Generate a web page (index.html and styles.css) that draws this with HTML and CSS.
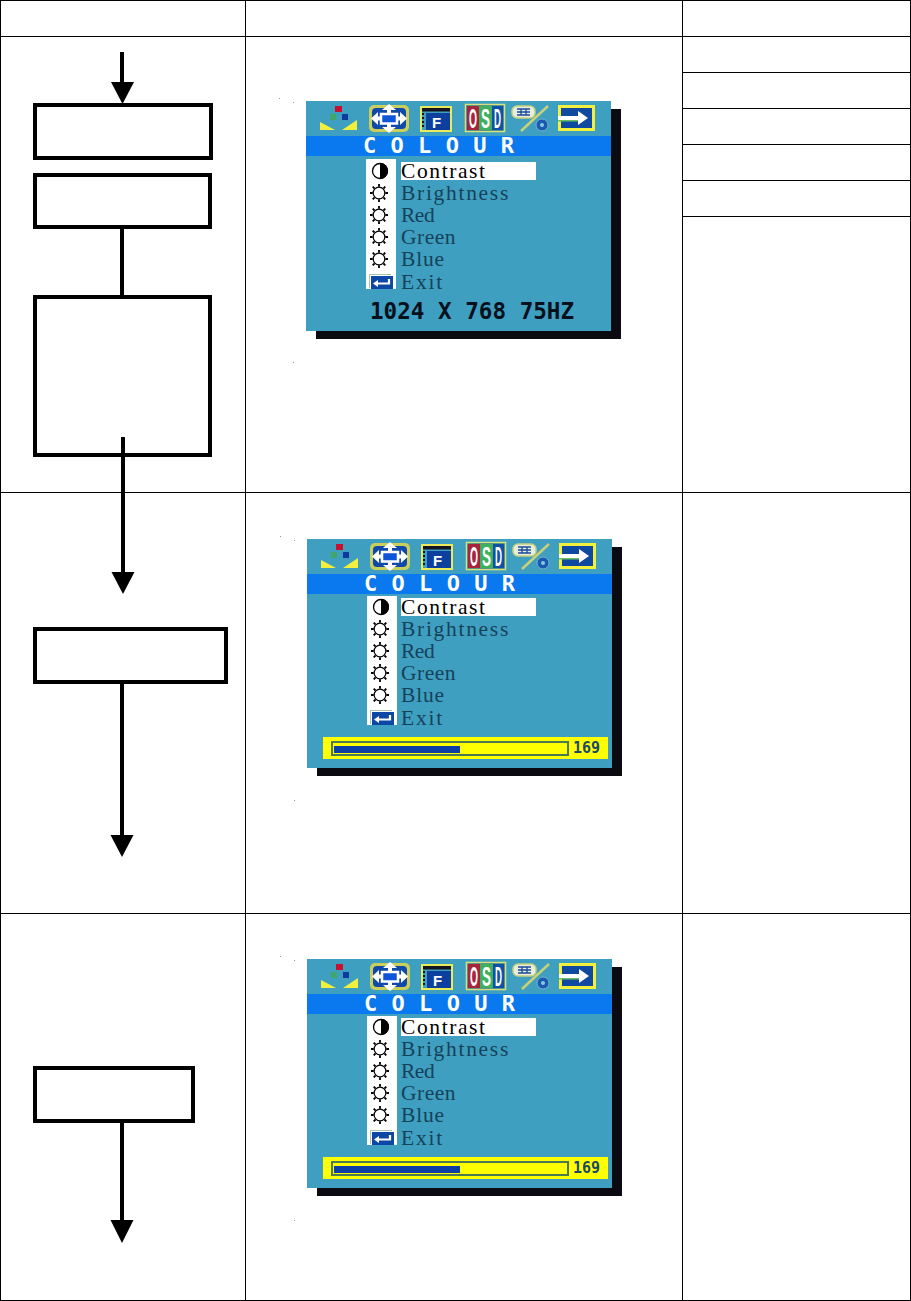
FILE: index.html
```html
<!DOCTYPE html>
<html lang="en">
<head>
<meta charset="utf-8">
<title>OSD colour menu flow</title>
<link rel="stylesheet" href="styles.css">
</head>
<body>
<svg class="defs" width="0" height="0" aria-hidden="true">
  <defs>
    <symbol id="strip" viewBox="0 0 305 35">
      <polygon points="14,29 14,21 29,29" fill="#f2f03c"/>
      <polygon points="36,29 51,19 51,29" fill="#f2f03c"/>
      <rect x="29" y="5" width="7" height="6" fill="#c8102e"/>
      <rect x="24" y="13" width="6" height="6" fill="#3fa568"/>
      <rect x="36" y="13" width="6" height="6" fill="#0d3a9c"/>

      <rect x="63" y="4" width="40" height="27" rx="5" fill="#c9cf5a"/>
      <rect x="66" y="7" width="34" height="21" rx="4" fill="#1149a8"/>
      <polygon points="83,3 90,9 76,9" fill="#fff"/>
      <polygon points="83,32 90,26 76,26" fill="#fff"/>
      <polygon points="65,17.500 72,11 72,24" fill="#fff"/>
      <polygon points="101,17.500 94,11 94,24" fill="#fff"/>
      <path d="M81 8h4v20h-4zM70 15.500h26v4h-26z" fill="#fff"/>
      <rect x="75" y="13" width="16" height="9.500" fill="#0f55d8" stroke="#fff" stroke-width="2.500"/>

      <rect x="114" y="5" width="32" height="26" fill="#eaea5a"/>
      <rect x="116" y="7" width="28" height="22" fill="#3f9fc1"/>
      <rect x="116" y="7" width="28" height="3.500" fill="#141420"/>
      <path d="M117 12v16" stroke="#141420" stroke-width="2" stroke-dasharray="2 2" fill="none"/>
      <rect x="120" y="12" width="24" height="17" fill="#0d3f9f"/>
      <text x="126" y="27" class="glyph-f">F</text>

      <rect x="159.500" y="3.500" width="39" height="27" fill="#2c7f8e" stroke="#d9e27a" stroke-width="1.500"/>
      <rect x="161" y="5" width="12" height="24" fill="#a8233c"/>
      <rect x="173" y="5" width="13" height="24" fill="#3fb060"/>
      <rect x="186" y="5" width="11" height="24" fill="#1050a8"/>
      <text x="163" y="27" class="glyph-osd" textLength="8" lengthAdjust="spacingAndGlyphs">O</text>
      <text x="175" y="27" class="glyph-osd" textLength="9" lengthAdjust="spacingAndGlyphs">S</text>
      <text x="188" y="27" class="glyph-osd" textLength="7" lengthAdjust="spacingAndGlyphs">D</text>

      <line x1="242" y1="5" x2="215" y2="30" stroke="#c8d078" stroke-width="2.500"/>
      <rect x="206" y="5" width="23" height="12" rx="5" fill="#e8eedd" stroke="#c8d078" stroke-width="1.500"/>
      <path d="M211 8h13M211 11h13M211 14h13M215 8v6M220 8v6" stroke="#1a4a9c" stroke-width="1.300" fill="none"/>
      <circle cx="236" cy="24" r="6" fill="#1a5ab0" stroke="#6fb4cf" stroke-width="1"/>
      <circle cx="236" cy="24" r="2" fill="#8fc6dc"/>

      <rect x="252" y="4" width="37" height="26" fill="#f2f03c"/>
      <rect x="255" y="7" width="31" height="20" fill="#0f4aa0"/>
      <rect x="252" y="15" width="24" height="4" fill="#fff"/>
      <rect x="252" y="19" width="24" height="1.500" fill="#6ac060"/>
      <polygon points="272,10 282,17 272,24" fill="#fff"/>
    </symbol>
    <symbol id="half" viewBox="0 0 18 18">
      <circle cx="9" cy="9" r="7.500" fill="#fff" stroke="#000" stroke-width="1.300"/>
      <path d="M9 1a8 8 0 0 1 0 16z" fill="#000"/>
    </symbol>
    <symbol id="sun" viewBox="0 0 20 20">
      <circle cx="10" cy="10" r="6.500" fill="#fff" stroke="#000" stroke-width="1.400"/>
      <path d="M10 0v3M10 17v3M0 10h3M17 10h3M3 3l2 2M15 15l2 2M17 3l-2 2M5 15l-2 2" stroke="#000" stroke-width="2" fill="none"/>
    </symbol>
    <symbol id="back" viewBox="0 0 24 15">
      <path d="M0.500 14V0.500H22" stroke="#a8c4a8" fill="none"/>
      <rect x="2" y="2" width="22" height="13" fill="#0d47a5"/>
      <path d="M20 5v4.500H8" stroke="#fff" stroke-width="2.200" fill="none"/>
      <polygon points="9,6 9,13 4,9.500" fill="#fff"/>
    </symbol>
  </defs>
</svg>

<main class="sheet">
  <div class="cell"></div>
  <div class="cell"></div>
  <div class="cell"></div>

  <div class="cell"></div>
  <div class="cell shot shot--first">
    <section class="osd">
      <i class="speck speck--a"></i><i class="speck speck--b"></i><i class="speck speck--c"></i>
      <svg class="strip"><use href="#strip"/></svg>
      <h2 class="title">COLOUR</h2>
      <ul class="menu">
        <li class="item item--on"><svg class="ico ico--half"><use href="#half"/></svg><span class="label l-contrast">Contrast</span></li>
        <li class="item"><svg class="ico"><use href="#sun"/></svg><span class="label l-brightness">Brightness</span></li>
        <li class="item"><svg class="ico"><use href="#sun"/></svg><span class="label l-red">Red</span></li>
        <li class="item"><svg class="ico"><use href="#sun"/></svg><span class="label l-green">Green</span></li>
        <li class="item"><svg class="ico"><use href="#sun"/></svg><span class="label l-blue">Blue</span></li>
        <li class="item"><svg class="ico ico--back"><use href="#back"/></svg><span class="label l-exit">Exit</span></li>
      </ul>
      <p class="mode">1024 X 768 75HZ</p>
    </section>
  </div>
  <div class="cell notes">
    <div class="note"></div>
    <div class="note"></div>
    <div class="note"></div>
    <div class="note"></div>
    <div class="note"></div>
  </div>

  <div class="cell"></div>
  <div class="cell shot shot--second">
    <section class="osd osd--bar">
      <i class="speck speck--a"></i><i class="speck speck--b"></i><i class="speck speck--c"></i>
      <svg class="strip"><use href="#strip"/></svg>
      <h2 class="title">COLOUR</h2>
      <ul class="menu">
        <li class="item item--on"><svg class="ico ico--half"><use href="#half"/></svg><span class="label l-contrast">Contrast</span></li>
        <li class="item"><svg class="ico"><use href="#sun"/></svg><span class="label l-brightness">Brightness</span></li>
        <li class="item"><svg class="ico"><use href="#sun"/></svg><span class="label l-red">Red</span></li>
        <li class="item"><svg class="ico"><use href="#sun"/></svg><span class="label l-green">Green</span></li>
        <li class="item"><svg class="ico"><use href="#sun"/></svg><span class="label l-blue">Blue</span></li>
        <li class="item"><svg class="ico ico--back"><use href="#back"/></svg><span class="label l-exit">Exit</span></li>
      </ul>
      <div class="level"><div class="track"><div class="fill"></div></div><span class="value">169</span></div>
    </section>
  </div>
  <div class="cell"></div>

  <div class="cell"></div>
  <div class="cell shot shot--third">
    <section class="osd osd--bar">
      <i class="speck speck--a"></i><i class="speck speck--b"></i><i class="speck speck--c"></i>
      <svg class="strip"><use href="#strip"/></svg>
      <h2 class="title">COLOUR</h2>
      <ul class="menu">
        <li class="item item--on"><svg class="ico ico--half"><use href="#half"/></svg><span class="label l-contrast">Contrast</span></li>
        <li class="item"><svg class="ico"><use href="#sun"/></svg><span class="label l-brightness">Brightness</span></li>
        <li class="item"><svg class="ico"><use href="#sun"/></svg><span class="label l-red">Red</span></li>
        <li class="item"><svg class="ico"><use href="#sun"/></svg><span class="label l-green">Green</span></li>
        <li class="item"><svg class="ico"><use href="#sun"/></svg><span class="label l-blue">Blue</span></li>
        <li class="item"><svg class="ico ico--back"><use href="#back"/></svg><span class="label l-exit">Exit</span></li>
      </ul>
      <div class="level"><div class="track"><div class="fill"></div></div><span class="value">169</span></div>
    </section>
  </div>
  <div class="cell"></div>

  <svg class="flow" viewBox="0 0 245 1301" aria-hidden="true">
    <g class="box">
      <rect x="35" y="105" width="176" height="53"/>
      <rect x="35" y="175" width="175" height="52"/>
      <rect x="35" y="297" width="175" height="158"/>
      <rect x="35" y="629" width="191" height="53"/>
      <rect x="35" y="1068" width="158" height="53"/>
    </g>
    <g class="wire">
      <line x1="122" y1="52" x2="122" y2="84"/>
      <line x1="122" y1="229" x2="122" y2="296"/>
      <line x1="123" y1="437" x2="123" y2="574"/>
      <line x1="122" y1="684" x2="122" y2="837"/>
      <line x1="122" y1="1123" x2="122" y2="1222"/>
    </g>
    <g class="head">
      <polygon points="111,82 134,82 122.500,104"/>
      <polygon points="111.500,572 134.500,572 123,594"/>
      <polygon points="110.500,835 133.500,835 122,857"/>
      <polygon points="110.500,1220 133.500,1220 122,1243"/>
    </g>
  </svg>
</main>
</body>
</html>
```

FILE: styles.css
```css
* { box-sizing: border-box; }

html, body { margin: 0; padding: 0; background: #fff; }

.defs { position: absolute; }

.sheet {
  position: relative;
  display: grid;
  grid-template-columns: 244px 436px 227px;
  grid-template-rows: 35px 455px 420px 386px;
  gap: 1px;
  padding: 1px;
  width: 911px;
  height: 1301px;
  background: #000;
}

.cell { background: #fff; min-width: 0; }

.notes { display: flex; flex-direction: column; }
.note { height: 36px; border-bottom: 1px solid #000; }

.shot { display: flex; align-items: flex-start; padding-left: 61px; }
.shot--first { padding-left: 60px; padding-top: 64px; }
.shot--second { padding-top: 46px; }
.shot--third { padding-top: 45px; }

.osd {
  position: relative;
  display: flex;
  flex-direction: column;
  width: 305px;
  height: 230px;
  background: #3f9fc1;
  box-shadow: 10px 8px 0 #0a0a10;
}
.osd--bar { height: 229px; }

.speck { position: absolute; width: 1px; height: 1px; background: #9a9a9a; }
.speck--a { left: -27px; top: -3px; }
.speck--b { left: -13px; top: 1px; }
.speck--c { left: -13px; top: 261px; }

.strip { display: block; width: 305px; height: 35px; flex: none; }

.glyph-f { font: 700 15px "Liberation Sans", sans-serif; fill: #fff; }
.glyph-osd { font: 700 27px "Liberation Sans", sans-serif; fill: #fff; }

.title {
  flex: none;
  height: 20px;
  margin: 0;
  padding-left: 57px;
  background: #0a78ee;
  color: #fff;
  font: 700 22px/20px "DejaVu Sans Mono", monospace;
  letter-spacing: 14.300px;
  white-space: nowrap;
}

.menu {
  position: relative;
  display: grid;
  grid-template-rows: repeat(5, 22px) 23px;
  flex: none;
  width: 232px;
  height: 134px;
  margin: 3px 0 0 60px;
  padding: 1px 0 0;
  list-style: none;
  background: linear-gradient(#fff, #fff) 0 0 / 30px 130px no-repeat;
}
.osd--bar .menu { margin-top: 2px; padding-top: 0; height: 133px; background-size: 30px 129px; }

.item { display: flex; align-items: center; }

.ico { display: block; flex: none; width: 18px; height: 18px; margin: 0 13px 0 4px; }
.ico--half { margin: 0 12px 0 5px; }
.ico--back { width: 24px; height: 15px; margin: 0 8px 0 3px; }

.label {
  display: block;
  color: #164259;
  font: 400 21.500px/18px "Liberation Serif", serif;
  white-space: nowrap;
}
.osd--bar .label { margin-left: -1px; }
.item--on .label { width: 135px; height: 18px; background: #fff; color: #000; }
.l-contrast { letter-spacing: 1.600px; }
.l-brightness { letter-spacing: 1.700px; }
.l-red { letter-spacing: -0.500px; }
.l-green { letter-spacing: 0.500px; }
.l-blue { letter-spacing: 0.800px; }
.l-exit { letter-spacing: 1.800px; }

.mode {
  margin: 8px 0 0 64px;
  color: #05101c;
  font: 700 22.600px/20px "DejaVu Sans Mono", monospace;
  white-space: nowrap;
}

.level {
  display: flex;
  align-items: center;
  gap: 4px;
  width: 285px;
  height: 22px;
  margin: 8px 0 0 16px;
  padding-left: 8px;
  background: #ffff00;
}
.track {
  width: 238px;
  height: 15px;
  padding: 3px 1px;
  border: 2px solid #4a7a50;
}
.fill { width: 54.300%; height: 7px; background: #0d3ea5; }
.value {
  color: #1a4a6a;
  font: 700 15px/22px "DejaVu Sans Mono", monospace;
}

.flow {
  position: absolute;
  left: 0;
  top: 0;
  width: 245px;
  height: 1301px;
  overflow: visible;
  pointer-events: none;
}
.box rect { fill: none; stroke: #000; stroke-width: 4; }
.wire line { stroke: #000; stroke-width: 4; }
.head polygon { fill: #000; }
```
